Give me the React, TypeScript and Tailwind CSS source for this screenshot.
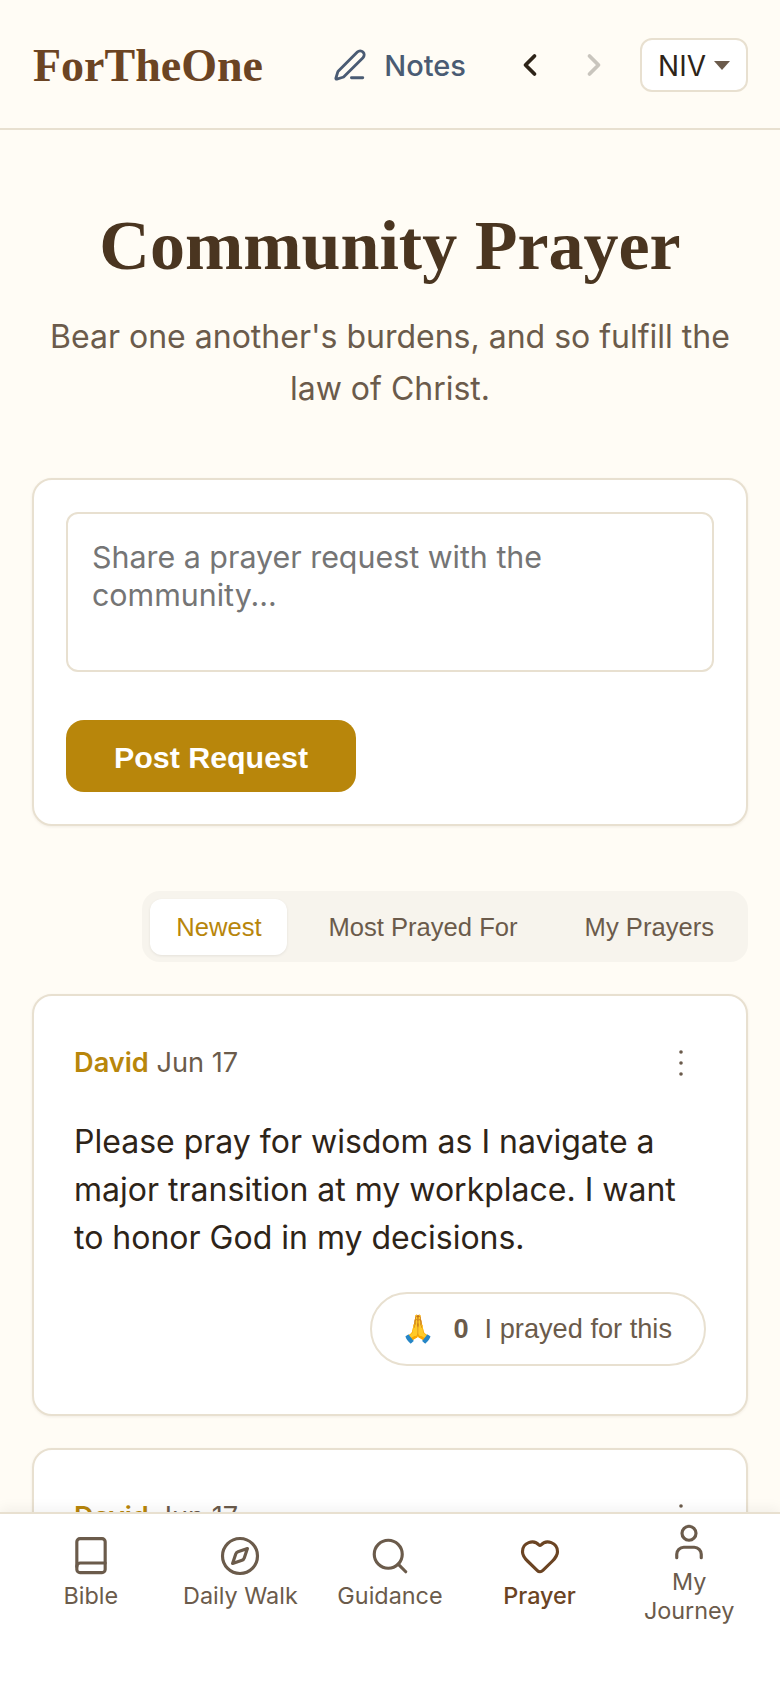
import { ChevronLeft, ChevronRight, Compass, Heart, PenLine, Search, User } from 'lucide-react';

const INTER = 'font-["Inter",sans-serif]';
const ARIAL = 'font-["Liberation_Sans",sans-serif]';
const SERIF = 'font-["Liberation_Serif",serif]';

function BookIcon() {
  return (
    <svg viewBox="0 0 24 24" fill="none" stroke="currentColor" strokeWidth={1.8} strokeLinecap="round" strokeLinejoin="round" className="mt-[3px] h-[42px] w-[42px]">
      <rect x="3.9" y="2.1" width="16.2" height="19.4" rx="1.8" />
      <path d="M3.9 18a2 2 0 0 1 2-2h14.2" />
    </svg>
  );
}

function DotsIcon() {
  return (
    <svg viewBox="0 0 8 30" fill="currentColor" className="mr-[21px] h-[30px] w-[8px] text-[#6b5b4b]">
      <circle cx="4" cy="4" r="1.8" />
      <circle cx="4" cy="15" r="1.8" />
      <circle cx="4" cy="26" r="1.8" />
    </svg>
  );
}

function PostCard({ clipped }: { clipped?: boolean }) {
  return (
    <div className="rounded-[20px] border-2 border-[#e8e0d0] bg-white px-[40px] pt-[47px] pb-[48px] shadow-[0_1px_3px_rgba(74,50,30,0.08)]">
      <div className="flex items-center justify-between">
        <p className="text-[27.2px] leading-[40px]">
          <span className="font-semibold text-[#b8860b]">David</span>{' '}
          <span className="text-[#6b5b4b]">Jun 17</span>
        </p>
        <DotsIcon />
      </div>
      {!clipped && (
        <>
          <p className="mt-[35px] text-[32px] leading-[48px] text-[#2e2418]">
            Please pray for wisdom as I navigate a major transition at my workplace. I want to honor God in my decisions.
          </p>
          <div className="mt-[30px] flex justify-end">
            <button className={`flex h-[74px] items-center rounded-full border-2 border-[#e8e0d0] bg-white pr-[32px] pl-[29px] text-[#6b5b4b] ${ARIAL}`}>
              <span className="text-[27.2px]">🙏</span>
              <span className="ml-[18px] text-[27.2px] font-bold">0</span>
              <span className="ml-[16px] text-[27.2px]">I prayed for this</span>
            </button>
          </div>
        </>
      )}
    </div>
  );
}

function NavItem({ icon, label, active }: { icon: React.ReactNode; label: React.ReactNode; active?: boolean }) {
  return (
    <div className={`flex flex-1 flex-col items-center text-center text-[23.4px] leading-[29px] ${active ? 'font-[450] text-[#6b4423]' : 'text-[#6b5b4b]'}`}>
      {icon}
      <span className="mt-[4px]">{label}</span>
    </div>
  );
}

export default function App() {
  return (
    <div className={`relative h-[1688px] w-[780px] overflow-hidden bg-[#fffcf5] ${INTER}`}>
      <header className="flex h-[130px] items-center border-b-2 border-[#e8e0d0] pt-[2px] pr-[32px] pl-[33px]">
        <span className={`text-[46px] font-bold text-[#6b4423] ${SERIF}`}>ForTheOne</span>
        <div className="ml-auto flex items-center">
          <PenLine className="h-[34px] w-[34px] text-[#4a5b73]" strokeWidth={2} />
          <span className="ml-[17px] pt-[2px] text-[29px] font-medium text-[#4a5b73]">Notes</span>
          <ChevronLeft className="ml-[46px] h-[36px] w-[36px] text-[#2e2418]" strokeWidth={2.5} />
          <ChevronRight className="ml-[28px] h-[36px] w-[36px] text-[#c9c5bd]" strokeWidth={2.5} />
          <div className="ml-[28px] flex h-[54px] w-[108px] items-center justify-center rounded-[12px] border-2 border-[#e8e0d0] bg-white">
            <span className="pt-[2px] text-[28px] text-[#2e2418]">NIV</span>
            <span className="ml-[8px] h-0 w-0 border-x-[8px] border-t-[9px] border-x-transparent border-t-[#6b5b4b]" />
          </div>
        </div>
      </header>

      <main className="px-[32px] pt-[76px]">
        <h1 className={`text-center text-[70px] leading-[80px] font-bold text-[#4a3520] ${SERIF}`}>Community Prayer</h1>
        <p className="mx-auto mt-[25px] w-[700px] text-center text-[32px] leading-[52px] text-[#6b5b4b]">
          Bear one another's burdens, and so fulfill the law of Christ.
        </p>

        <section className="mt-[63px] rounded-[20px] border-2 border-[#e8e0d0] bg-white p-[32px] shadow-[0_1px_3px_rgba(74,50,30,0.08)]">
          <textarea
            className="block h-[160px] w-full resize-none rounded-[12px] border-2 border-[#e8e0d0] bg-white px-[24px] py-[24px] text-[30.4px] leading-[38px] placeholder:text-[#757575]"
            placeholder="Share a prayer request with the community..."
          />
          <button className={`mt-[48px] h-[72px] w-[290px] rounded-[18px] bg-[#b8860b] pt-[3px] text-[30.4px] font-bold text-white ${ARIAL}`}>Post Request</button>
        </section>

        <div className="mt-[65px] flex justify-end">
          <div className={`flex h-[71px] items-center rounded-[18px] bg-[#f7f4ed] pr-[34px] pl-[8px] text-[25.6px] text-[#6b5b4b] ${ARIAL}`}>
            <span className="flex h-[56px] w-[137px] items-center justify-center rounded-[12px] bg-white pt-[1px] text-[#b8860b] shadow-[0_1px_3px_rgba(0,0,0,0.08)]">Newest</span>
            <span className="ml-[41px] pt-[2px]">Most Prayed For</span>
            <span className="ml-[67px] pt-[2px]">My Prayers</span>
          </div>
        </div>

        <div className="mt-[32px] flex flex-col gap-[32px]">
          <PostCard />
          <PostCard clipped />
        </div>
      </main>

      <nav className="absolute inset-x-0 bottom-0 flex h-[176px] border-t-2 border-[#e8e0d0] bg-white px-[16px] pt-[18px] shadow-[0_-4px_12px_rgba(0,0,0,0.05)]">
        <NavItem icon={<BookIcon />} label="Bible" />
        <NavItem icon={<Compass className="mt-[3px] h-[42px] w-[42px]" strokeWidth={1.8} />} label="Daily Walk" />
        <NavItem icon={<Search className="mt-[3px] h-[42px] w-[42px]" strokeWidth={1.8} />} label="Guidance" />
        <NavItem icon={<Heart className="mt-[3px] h-[42px] w-[42px]" strokeWidth={1.8} />} label="Prayer" active />
        <NavItem icon={<User className="-mt-[11px] h-[42px] w-[42px]" strokeWidth={1.8} />} label={<>My<br />Journey</>} />
      </nav>
    </div>
  );
}
